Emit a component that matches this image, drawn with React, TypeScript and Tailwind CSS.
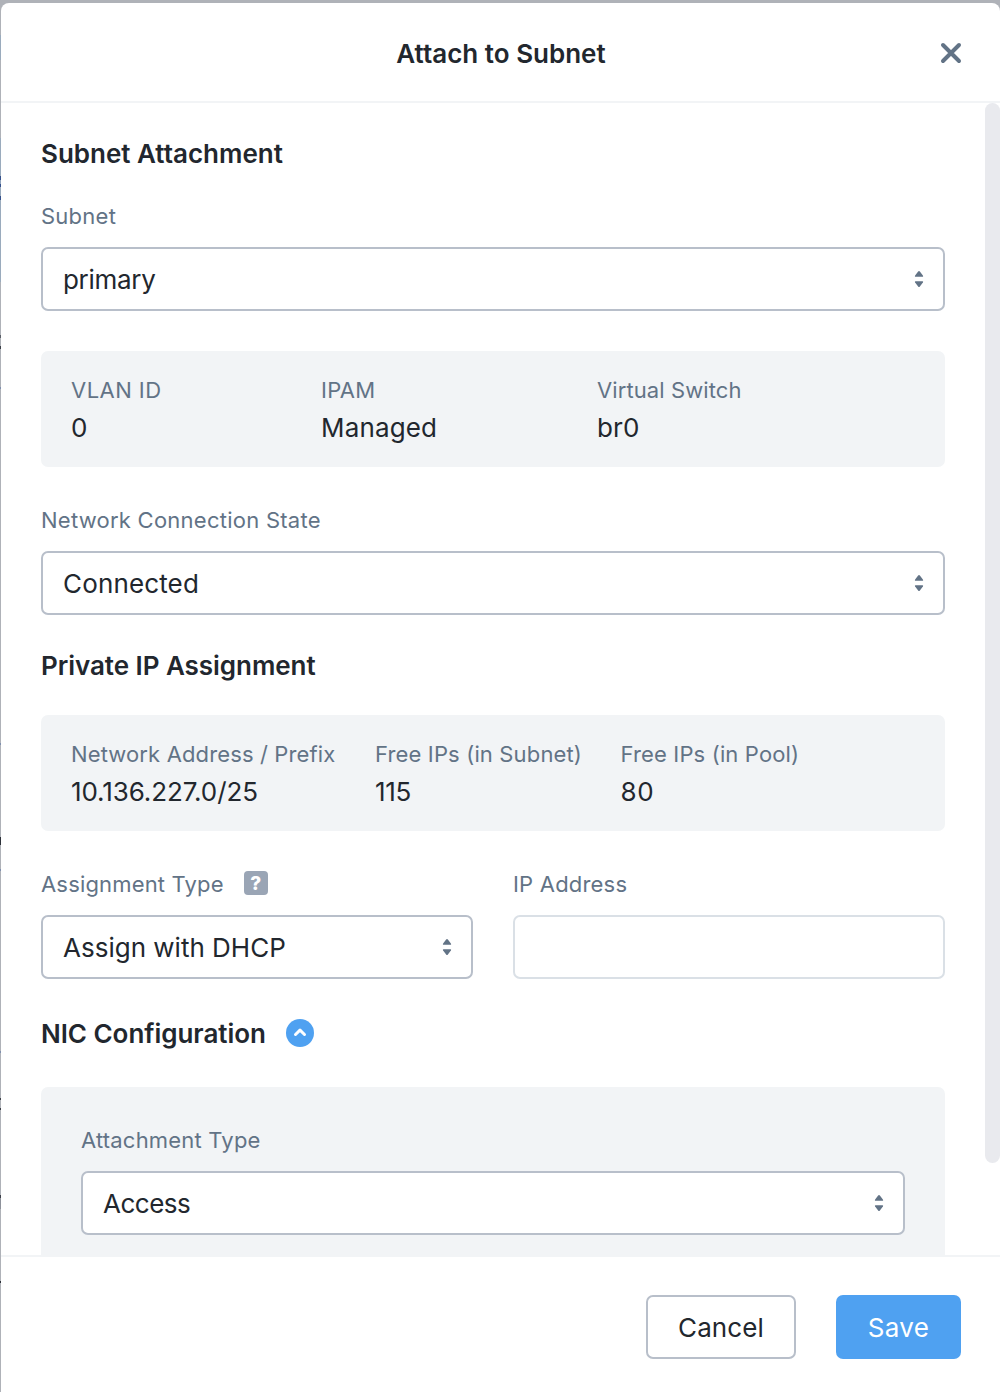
import type { ReactNode } from 'react';

function Sorter() {
  return (
    <svg width="10" height="16" viewBox="0 0 10 16" className="shrink-0 fill-[#627386]">
      <path d="M4.1.6Q5-.4 5.9.6L8.900 4.400Q9.500 5.700 8.500 5.800H1.500Q.5 5.700 1.100 4.400Z" />
      <path d="M4.1 15.400Q5 16.400 5.900 15.400L8.900 11.600Q9.500 10.300 8.500 10.200H1.500Q.5 10.300 1.100 11.600Z" />
    </svg>
  );
}

function Select({ value, tracking = '' }: { value: string; tracking?: string }) {
  return (
    <div className="flex h-16 items-center justify-between rounded-[7px] border-2 border-[#b8bfca] bg-white pr-[19px] pl-5">
      <span className={`pt-[2px] text-[26px] leading-[38px] ${tracking}`}>{value}</span>
      <Sorter />
    </div>
  );
}

function Heading({ children, className = '' }: { children: ReactNode; className?: string }) {
  return <h2 className={`flex h-[38px] items-center text-[26px] leading-[38px] font-semibold ${className}`}>{children}</h2>;
}

function Label({ children, className = '', tracking = 'tracking-[0.25px]' }: { children: ReactNode; className?: string; tracking?: string }) {
  return (
    <div className={`flex h-[30px] items-center text-[22px] leading-[30px] whitespace-nowrap text-[#627386] ${tracking} ${className}`}>
      {children}
    </div>
  );
}

type FactProps = { label: string; value: string; className?: string; tracking?: string; valueTracking?: string };

function Fact({ label, value, className = '', tracking, valueTracking = '' }: FactProps) {
  return (
    <div className={className}>
      <Label tracking={tracking}>{label}</Label>
      <div className={`mt-1 text-[26px] leading-[38px] ${valueTracking}`}>{value}</div>
    </div>
  );
}

// Sliver of the dimmed page that shows beside the dialog: [height, colour] bands.
const backdrop: [number, string][] = [
  [32, '#afb2b8'], [25, '#9aabbd'], [78, '#afb2b8'], [38, '#9aabbd'],
  [4, '#34508c'], [4, '#8fa2bb'], [3, '#34508c'], [9, '#9aabbd'], [4, '#34508c'],
  [82, '#9aabbd'], [53, '#afb2b8'], [3, '#5b5f68'], [8, '#afb2b8'], [3, '#3c4049'],
  [38, '#afb2b8'], [2, '#7f8fae'], [354, '#afb2b8'], [2, '#7f8fae'],
  [92, '#afb2b8'], [8, '#2c3038'], [24, '#afb2b8'], [2, '#7f8fae'],
  [180, '#afb2b8'], [2, '#7f8fae'], [45, '#afb2b8'], [2, '#3c4049'],
  [8, '#afb2b8'], [2, '#3c4049'], [85, '#afb2b8'], [3, '#3c4049'], [11, '#8e929b'],
  [72, '#afb2b8'], [2, '#2c3038'],
];

export default function App() {
  return (
    <div className="flex h-[1392px] w-[1000px] overflow-hidden bg-[#afb2b8] pt-[3px] font-['Inter',sans-serif] text-[#22272e]">
      <div className="w-px shrink-0">
        {backdrop.map(([height, color], i) => (
          <div key={i} style={{ height, backgroundColor: color }} />
        ))}
      </div>
      <div className="flex min-w-0 flex-1 flex-col overflow-hidden rounded-t-[8px] bg-white">
        <header className="relative flex h-[100px] shrink-0 items-center justify-center border-b-2 border-[#f2f4f6]">
          <h1 className="pt-[4px] pl-px text-[26px] leading-[38px] font-semibold">Attach to Subnet</h1>
          <button aria-label="Close" className="absolute top-[39px] right-[38px]">
            <svg width="22" height="22" viewBox="0 0 22 22" fill="none" stroke="#627386" strokeWidth="4" strokeLinecap="round">
              <path d="M3 3L19 19M19 3L3 19" />
            </svg>
          </button>
        </header>

        <main className="flex h-[1152px] shrink-0 justify-between overflow-hidden pl-10">
          <div className="w-[904px] shrink-0 pt-8">
            <Heading>Subnet Attachment</Heading>
            <Label className="mt-7 mb-4">Subnet</Label>
            <Select value="primary" tracking="tracking-[-0.3px]" />

            <div className="mt-10 flex h-[116px] rounded-[7px] bg-[#f2f4f6] pt-6 pl-[30px]">
              <Fact label="VLAN ID" value="0" className="w-[250px]" tracking="tracking-[0.45px]" />
              <Fact label="IPAM" value="Managed" className="w-[276px]" valueTracking="tracking-[0.15px]" />
              <Fact label="Virtual Switch" value="br0" tracking="tracking-[0.1px]" valueTracking="tracking-[0.1px]" />
            </div>

            <Label className="mt-[38px] mb-4">Network Connection State</Label>
            <Select value="Connected" tracking="tracking-[0.15px]" />

            <Heading className="mt-8 tracking-[-0.05px]">Private IP Assignment</Heading>
            <div className="mt-[30px] flex h-[116px] rounded-[7px] bg-[#f2f4f6] pt-6 pl-[30px]">
              <Fact label="Network Address / Prefix" value="10.136.227.0/25" className="w-[304px]" tracking="tracking-[0.13px]" valueTracking="tracking-[-0.1px]" />
              <Fact label="Free IPs (in Subnet)" value="115" className="w-[245.5px]" tracking="tracking-[0.15px]" valueTracking="tracking-[-0.3px]" />
              <Fact label="Free IPs (in Pool)" value="80" tracking="tracking-[0.15px]" valueTracking="tracking-[0.6px]" />
            </div>

            <div className="mt-[38px] grid grid-cols-2 gap-10">
              <div>
                <Label className="mb-4" tracking="tracking-[0.17px]">
                  Assignment Type
                  <span className="mb-[2px] ml-5 flex size-6 items-center justify-center rounded-[4px] bg-[#9aa5b5] text-[19px] leading-none font-extrabold tracking-normal text-white">
                    ?
                  </span>
                </Label>
                <Select value="Assign with DHCP" />
              </div>
              <div>
                <Label className="mb-4" tracking="tracking-[0.2px]">IP Address</Label>
                <div className="h-16 rounded-[7px] border-2 border-[#dae0e6] bg-white" />
              </div>
            </div>

            <Heading className="mt-9 tracking-[-0.04px]">
              NIC Configuration
              <span className="mb-[2px] ml-5 flex size-7 items-center justify-center rounded-full bg-[#4fa1f1]">
                <svg width="14" height="10" viewBox="0 0 14 10" fill="none" stroke="white" strokeWidth="3" strokeLinecap="round" strokeLinejoin="round">
                  <path d="M2.500 6.500L7 2.200L11.500 6.500" />
                </svg>
              </span>
            </Heading>
            <div className="mt-[34px] h-[240px] rounded-[7px] bg-[#f2f4f6] px-10 pt-[38px]">
              <Label className="mb-4" tracking="tracking-[0.2px]">Attachment Type</Label>
              <Select value="Access" tracking="tracking-[-0.5px]" />
            </div>
          </div>
          <div className="h-[1060px] w-[15px] rounded-full bg-[#e9eaee]" />
        </main>

        <footer className="flex flex-1 items-start justify-end gap-10 border-t-2 border-[#f2f4f6] pt-[38px] pr-[39px]">
          <button className="h-16 w-[150px] rounded-[7px] border-2 border-[#b8bfca] pt-px text-[26px] leading-[38px] tracking-[0.1px]">Cancel</button>
          <button className="h-16 w-[125px] rounded-[7px] bg-[#4fa1f1] pt-px text-[26px] leading-[38px] tracking-[0.3px] text-white">Save</button>
        </footer>
      </div>
    </div>
  );
}
